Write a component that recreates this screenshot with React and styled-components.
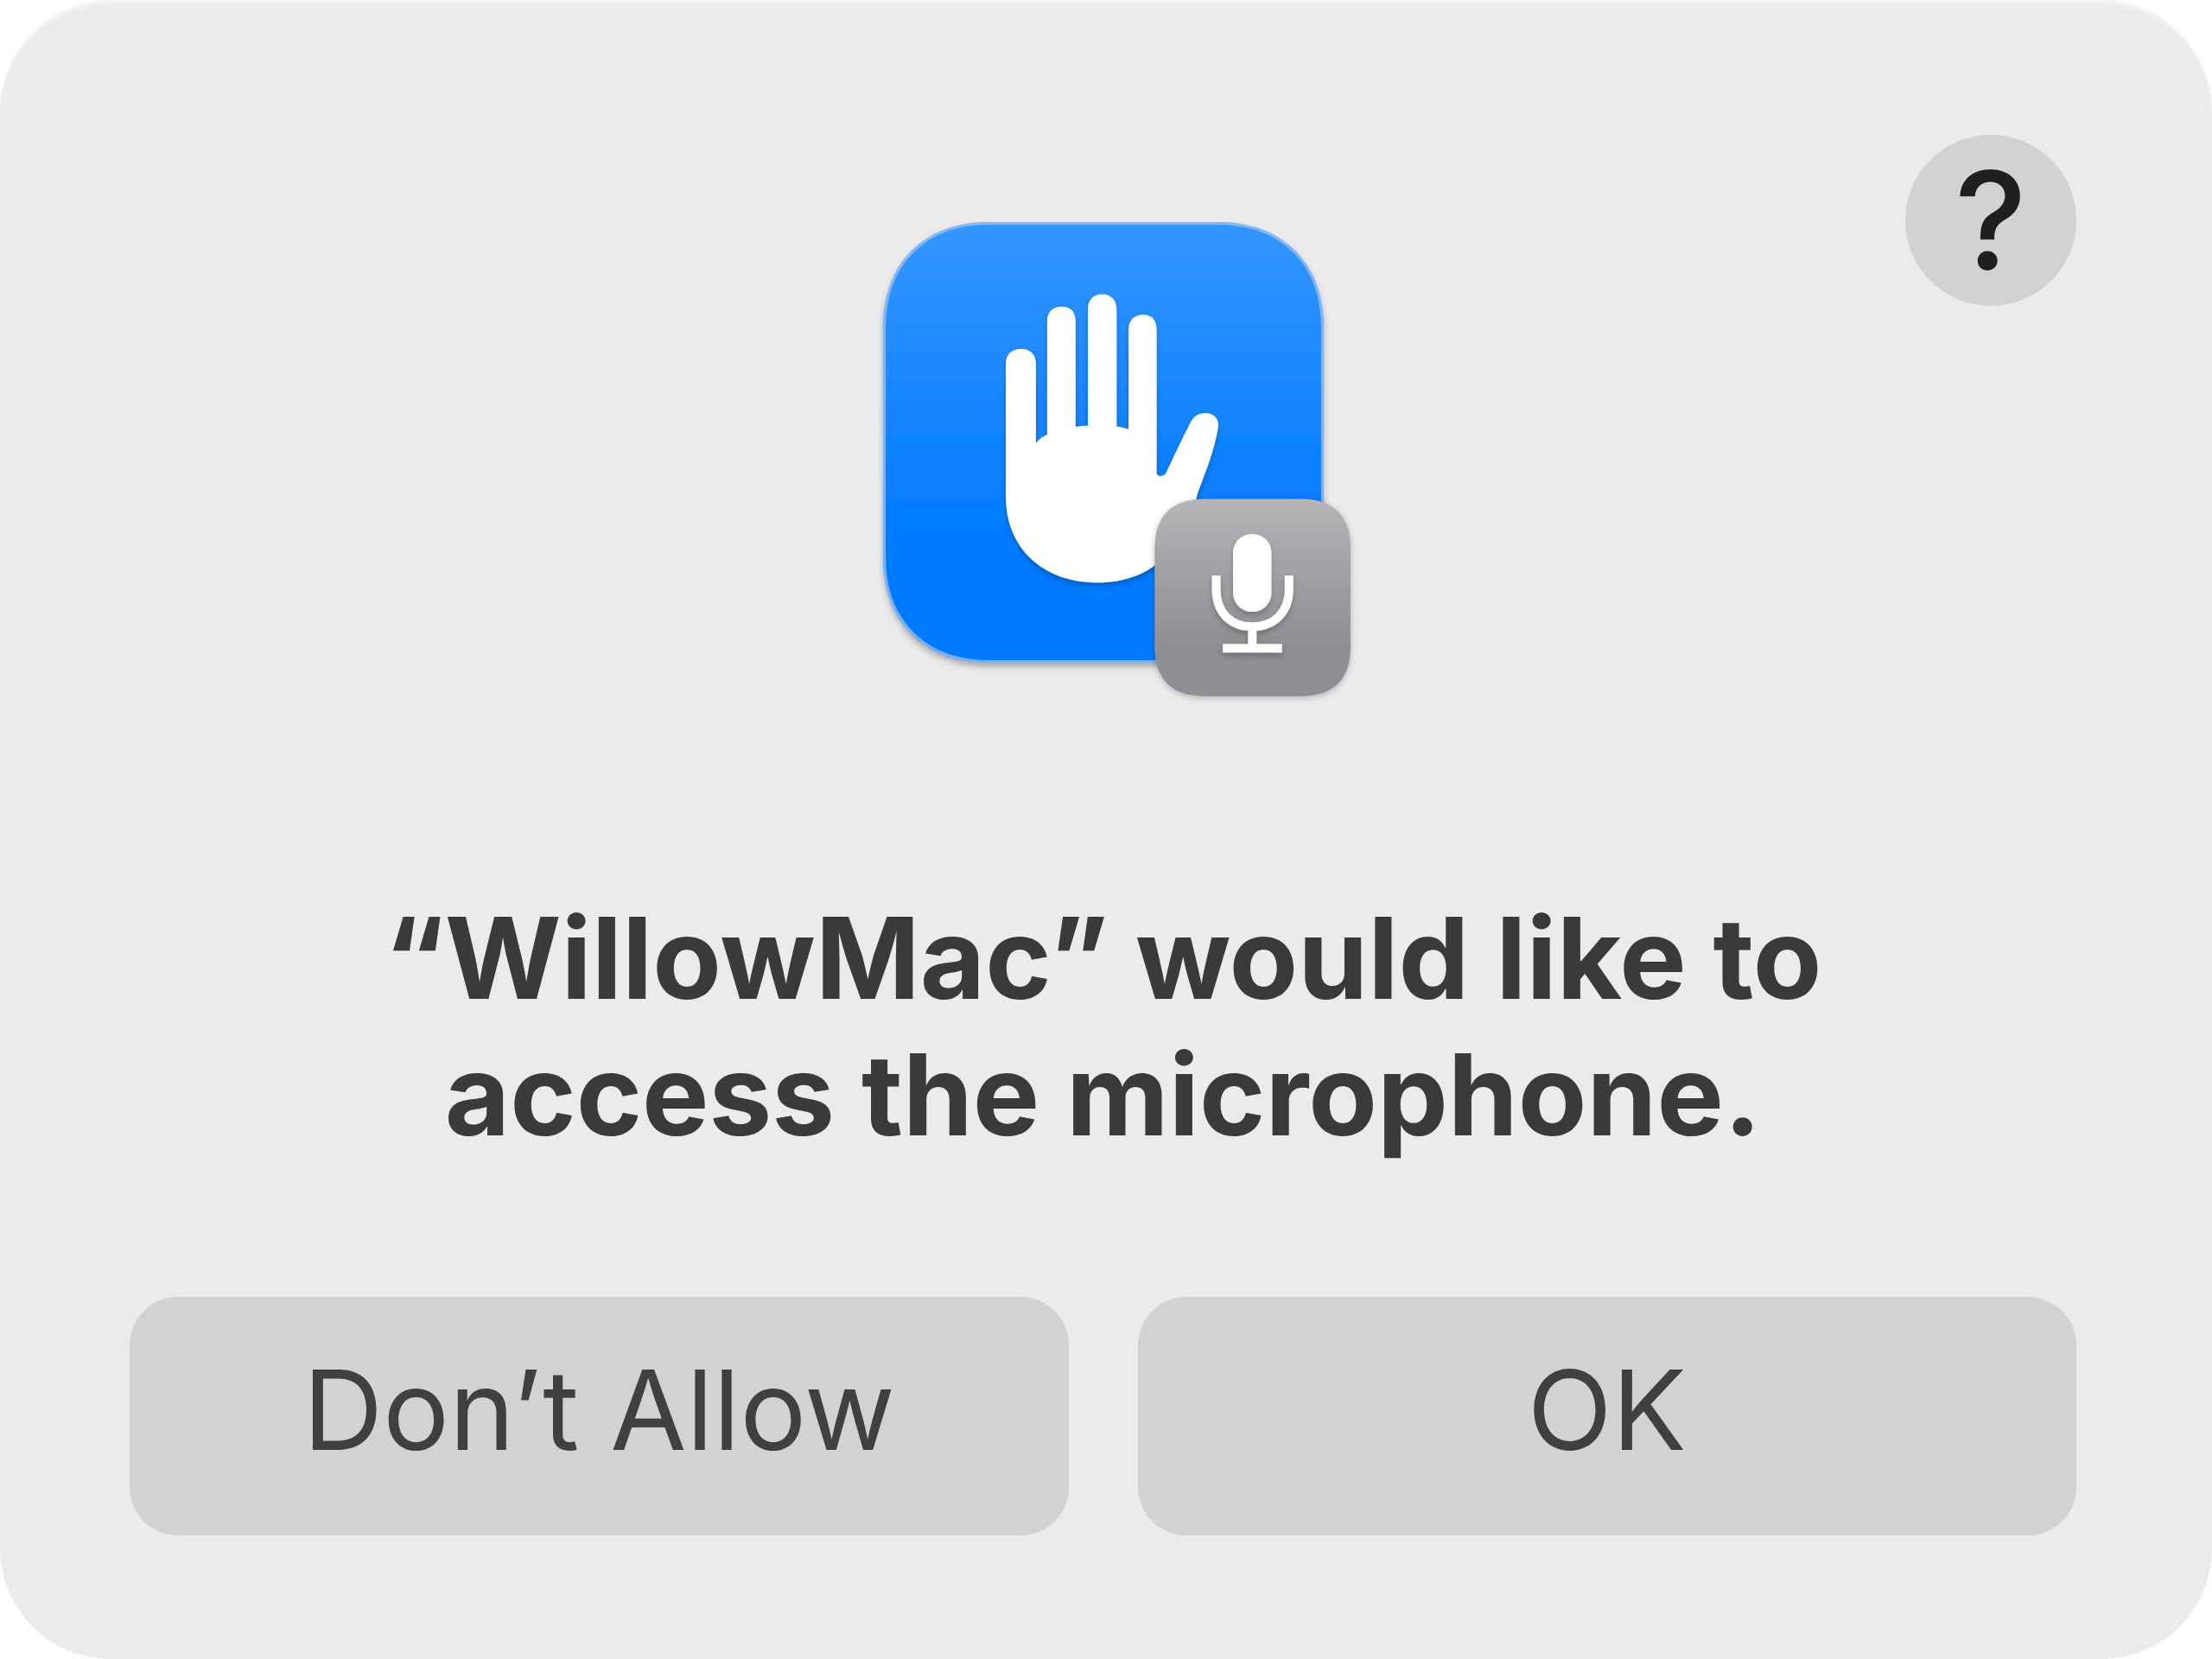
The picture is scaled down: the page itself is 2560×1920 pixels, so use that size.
import React from "react";
import styled, { createGlobalStyle } from "styled-components";

const GlobalStyle = createGlobalStyle`
  * { box-sizing: border-box; }
  body { margin: 0; background: #ffffff; }
`;

const Dialog = styled.main`
  min-height: 100vh;
  padding: 156px 157px 143px 150px;
  display: flex;
  flex-direction: column;
  border-radius: 128px;
  background: #ebebed;
  box-shadow: inset 0 3px #f5f5f6, inset 0 8px #eeeeef;
  font-family: Inter, "Liberation Sans", sans-serif;
  color: #3a3a3b;
`;

const Header = styled.header`
  display: grid;
  grid-template-columns: 1fr auto 1fr;
`;

const AppIcon = styled.svg`
  grid-column: 2;
  width: 510px;
  height: 510px;
  margin-top: 101px;
  overflow: visible;
`;

const HelpButton = styled.button`
  grid-column: 3;
  justify-self: end;
  width: 198px;
  height: 198px;
  padding: 0;
  border: 0;
  border-radius: 50%;
  background: #d2d2d4;
  color: #1f1f21;
  font: 500 158px/198px Inter, "Liberation Sans", sans-serif;
`;

const Title = styled.h1`
  margin: 263px 0 155px;
  font-size: 130px;
  font-weight: 700;
  line-height: 158px;
  text-align: center;
`;

const Actions = styled.div`
  display: grid;
  grid-template-columns: 1fr 1fr;
  gap: 80px;
`;

const ActionButton = styled.button`
  height: 276px;
  padding: 0 0 14px;
  border: 0;
  border-radius: 56px;
  background: #d2d2d4;
  color: #404041;
  font: 400 128px/158px Inter, "Liberation Sans", sans-serif;
`;

const tilePath =
  "M57 390C57 194 181 70 377 70H1069C1265 70 1389 194 1389 390V1082C1389 1278 1265 1402 1069 1402H377C181 1402 57 1278 57 1082Z";

function PrivacyIcon() {
  return (
    <AppIcon viewBox="57 70 1332 1332" role="img" aria-label="Microphone privacy">
      <defs>
        <linearGradient id="blue" x1="0" y1="70" x2="0" y2="1402" gradientUnits="userSpaceOnUse">
          <stop offset="0" stopColor="#3596ff" />
          <stop offset="0.72" stopColor="#007aff" />
        </linearGradient>
        <linearGradient id="gray" x1="0" y1="907" x2="0" y2="1503" gradientUnits="userSpaceOnUse">
          <stop offset="0" stopColor="#b5b5b8" />
          <stop offset="0.74" stopColor="#8e8e93" />
        </linearGradient>
        <filter id="tileShadow" x="-10%" y="-10%" width="120%" height="120%">
          <feDropShadow dx="0" dy="12" stdDeviation="10" floodColor="#000000" floodOpacity="0.28" />
        </filter>
        <filter id="badgeShadow" x="-10%" y="-10%" width="120%" height="120%">
          <feDropShadow dx="0" dy="5" stdDeviation="10" floodColor="#000000" floodOpacity="0.25" />
        </filter>
        <filter id="glyphShadow" x="-10%" y="-10%" width="120%" height="120%">
          <feDropShadow dx="0" dy="10" stdDeviation="9" floodColor="#000000" floodOpacity="0.22" />
        </filter>
        <clipPath id="tileClip">
          <path d={tilePath} />
        </clipPath>
      </defs>
      <path d={tilePath} fill="url(#blue)" filter="url(#tileShadow)" />
      <path
        d={tilePath}
        fill="none"
        stroke="#9fc3f2"
        strokeOpacity="0.75"
        strokeWidth="16"
        clipPath="url(#tileClip)"
      />
      <path
        d="M428 498C428 470 446 453 474 453S519 470 519 498V738C529 726 540 718 553 712V370C553 342 570 325 597 325S639 342 639 370V689Q657 686 676 686V334C676 306 692 288 719 288S763 306 763 334V688Q781 690 799 696V395C799 367 816 350 843 350S884 367 884 395V828Q885 838 896 838Q906 838 911 831L922 808C944 760 966 716 987 674C997 656 1011 647 1031 647C1056 647 1073 664 1070 688C1060 760 1030 830 1007 892C972 1050 874 1160 706 1160C540 1160 428 1056 428 900Z"
        fill="#ffffff"
        filter="url(#glyphShadow)"
      />
      <path
        d="M878 1057C878 958 929 907 1028 907H1320C1419 907 1470 958 1470 1057V1353C1470 1452 1419 1503 1320 1503H1028C929 1503 878 1452 878 1353Z"
        fill="url(#gray)"
        filter="url(#badgeShadow)"
      />
      <g filter="url(#glyphShadow)">
        <rect x="1115" y="1013" width="116" height="235" rx="56" fill="#ffffff" />
        <path
          d="M1064 1138V1180C1064 1250 1108 1293 1173 1293S1284 1250 1284 1180V1138"
          fill="none"
          stroke="#ffffff"
          strokeWidth="26"
        />
        <path d="M1160 1298H1186V1345H1263V1371H1084V1345H1160Z" fill="#ffffff" />
      </g>
    </AppIcon>
  );
}

export default function App() {
  return (
    <>
      <GlobalStyle />
      <Dialog role="alertdialog" aria-labelledby="dialog-title">
        <Header>
          <PrivacyIcon />
          <HelpButton type="button" title="Help">?</HelpButton>
        </Header>
        <Title id="dialog-title">
          “WillowMac” would like to
          <br />
          access the microphone.
        </Title>
        <Actions>
          <ActionButton type="button">Don’t Allow</ActionButton>
          <ActionButton type="button">OK</ActionButton>
        </Actions>
      </Dialog>
    </>
  );
}
